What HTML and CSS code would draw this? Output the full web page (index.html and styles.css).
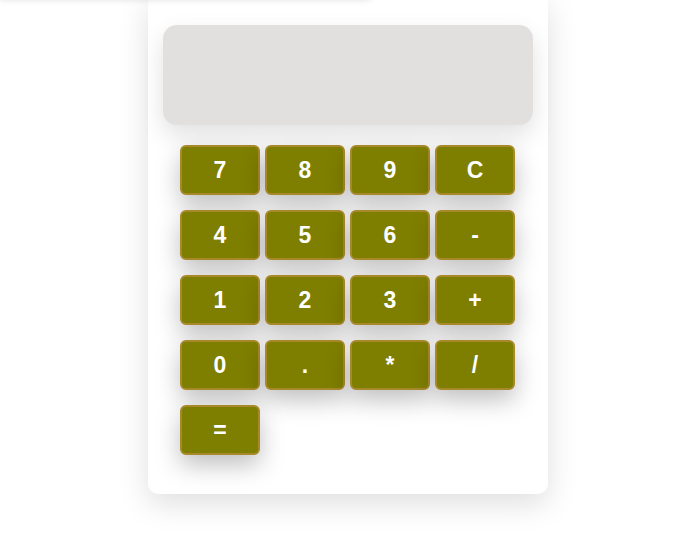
FILE: index.html
```html
<!DOCTYPE html>
<html>
<head>
<meta charset="utf-8">
<link rel="stylesheet" href="styles.css">
</head>
<body>
<div class="topbar"></div>
<div class="calc">
  <div class="display"></div>
  <div class="keys">
    <button class="key">7</button>
    <button class="key">8</button>
    <button class="key">9</button>
    <button class="key">C</button>
    <button class="key">4</button>
    <button class="key">5</button>
    <button class="key">6</button>
    <button class="key">-</button>
    <button class="key">1</button>
    <button class="key">2</button>
    <button class="key">3</button>
    <button class="key">+</button>
    <button class="key">0</button>
    <button class="key">.</button>
    <button class="key">*</button>
    <button class="key">/</button>
    <button class="key">=</button>
  </div>
</div>
</body>
</html>
```
FILE: styles.css
```css
html, body {
  margin: 0;
  padding: 0;
  background: #ffffff;
  font-family: "Liberation Sans", Arial, sans-serif;
}
body {
  min-height: 541px;
}
.topbar {
  width: 370px;
  height: 20px;
  margin-top: -20px;
  background: #ffffff;
  box-shadow: 0 0 6px rgba(0, 0, 0, 0.12);
  position: relative;
  z-index: 1;
}
.calc {
  width: 400px;
  margin: -6px 0 0 148px;
  padding: 31px 15px 39px;
  box-sizing: border-box;
  background: #ffffff;
  border-radius: 10px;
  box-shadow: 0 10px 30px rgba(0, 0, 0, 0.13);
}
.display {
  height: 100px;
  background: #e2dfdf;
  border-radius: 14px;
  box-shadow: 0 10px 25px rgba(0, 0, 0, 0.12);
  margin-bottom: 20px;
}
.keys {
  display: grid;
  grid-template-columns: repeat(4, 80px);
  grid-auto-rows: 50px;
  column-gap: 5px;
  row-gap: 15px;
  padding-left: 17px;
}
.key {
  margin: 0;
  padding: 0;
  background: #7e7e00;
  border: 2px solid #a8892a;
  border-radius: 6px;
  color: #ffffff;
  font-family: "Liberation Sans", Arial, sans-serif;
  font-weight: bold;
  font-size: 23px;
  box-shadow: 0 10px 24px rgba(0, 0, 0, 0.25);
}
```
